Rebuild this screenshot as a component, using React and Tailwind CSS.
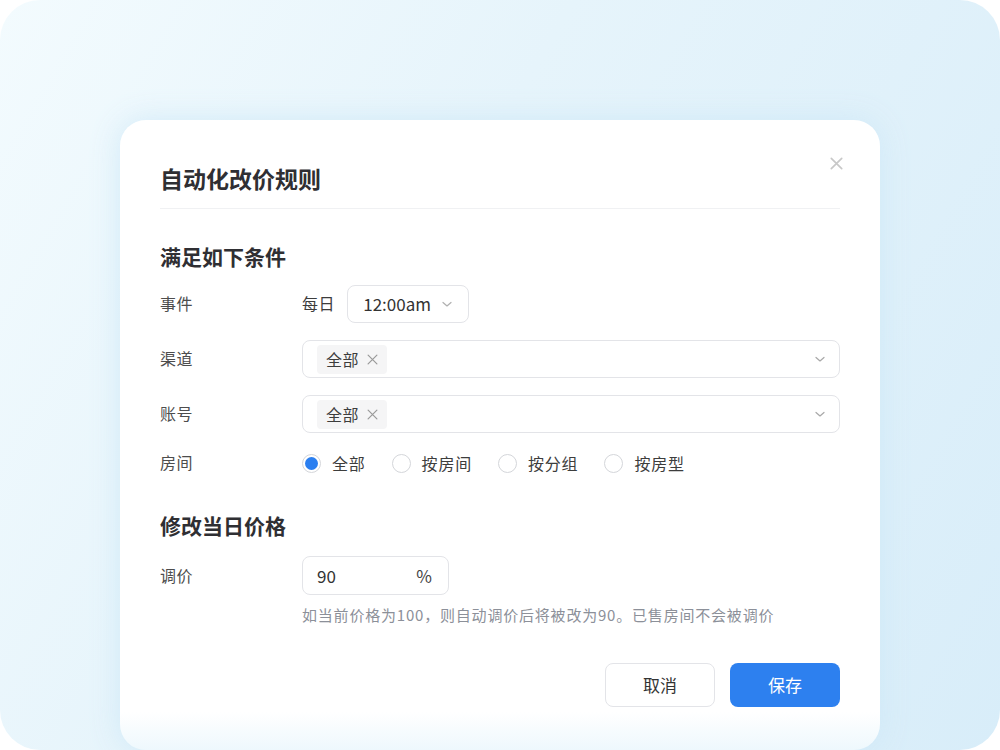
import React from "react";

const font = { fontFamily: '"Noto Sans CJK SC", "Noto Sans", sans-serif' };

function Chevron({ className = "" }) {
  return (
    <svg className={className} width="12" height="12" viewBox="0 0 12 12" fill="none">
      <path d="M2 4.5 L6 8 L10 4.5" stroke="currentColor" strokeWidth="1.2" strokeLinecap="round" strokeLinejoin="round" />
    </svg>
  );
}

function XIcon({ size = 10, className = "", sw = 1.2 }) {
  return (
    <svg className={className} width={size} height={size} viewBox="0 0 10 10" fill="none">
      <path d="M1 1 L9 9 M9 1 L1 9" stroke="currentColor" strokeWidth={sw} strokeLinecap="round" />
    </svg>
  );
}

function Tag() {
  return (
    <div className="flex items-center h-[29px] pl-[9px] pr-[9px] rounded-[4px] bg-[#f5f5f6] gap-[8px]">
      <span className="text-[16px] tracking-[0.6px] text-[#3d3d3d] leading-none">全部</span>
      <XIcon size={11} sw={1.1} className="text-[#9a9a9a]" />
    </div>
  );
}

function MultiSelect() {
  return (
    <div className="flex-1 h-[38px] rounded-[8px] border border-[#e3e4e8] bg-white flex items-center pl-[14px] pr-[13px] justify-between">
      <Tag />
      <Chevron className="text-[#a8a8a8]" />
    </div>
  );
}

function Radio({ checked, label }) {
  return (
    <div className="flex items-center gap-[11px]">
      <div className="w-[19px] h-[19px] rounded-full border border-[#d4d6da] bg-white flex items-center justify-center">
        {checked && <div className="w-[13px] h-[13px] rounded-full bg-[#2b7ff0]" />}
      </div>
      <span className="text-[16px] tracking-[0.8px] text-[#3d3d3d]">{label}</span>
    </div>
  );
}

function Row({ label, children, className = "" }) {
  return (
    <div className={"flex items-center " + className}>
      <div className="w-[142px] text-[16px] tracking-[0.6px] text-[#4d4d4d] -mt-[2px]">{label}</div>
      <div className="flex-1 flex items-center">{children}</div>
    </div>
  );
}

export default function App() {
  return (
    <div className="w-[1000px] h-[750px] bg-white overflow-hidden" style={font}>
      <div className="w-[1000px] h-[750px] rounded-[40px] bg-[linear-gradient(120deg,#f3fbfe_0%,#e6f4fb_40%,#d8edf9_100%)] pt-[120px] px-[120px]">
        <div className="h-[630px] rounded-[26px] bg-[linear-gradient(to_bottom,#ffffff_0%,#ffffff_94%,#eef8fd_100%)] shadow-[0_0_30px_rgba(205,232,247,0.9)] px-[40px] pt-[43px]">
          <div className="flex items-start justify-between">
            <h1 className="text-[23px] leading-[30px] font-bold text-[#2f2f33]">自动化改价规则</h1>
            <XIcon size={13} sw={1.3} className="text-[#c8c8c8] mt-[-6px] mr-[-3px]" />
          </div>
          <div className="mt-[15px] h-px bg-[#f0f1f3]" />

          <h2 className="mt-[33px] text-[21px] leading-[28px] font-bold text-[#2f2f33]">满足如下条件</h2>

          <Row label="事件" className="mt-[15px]">
            <span className="text-[16px] tracking-[0.6px] text-[#3d3d3d] mr-[12px] -mt-[2px]">每日</span>
            <div className="w-[122px] h-[38px] rounded-[8px] border border-[#e3e4e8] flex items-center justify-between pl-[15px] pr-[15px]">
              <span className="text-[17px] text-[#333]">12:00am</span>
              <Chevron className="text-[#b0b0b0]" />
            </div>
          </Row>

          <Row label="渠道" className="mt-[17px]">
            <MultiSelect />
          </Row>

          <Row label="账号" className="mt-[17px]">
            <MultiSelect />
          </Row>

          <Row label="房间" className="mt-[18px] h-[24px]">
            <div className="flex items-center gap-[26px]">
              <Radio checked label="全部" />
              <Radio label="按房间" />
              <Radio label="按分组" />
              <Radio label="按房型" />
            </div>
          </Row>

          <h2 className="mt-[36px] text-[21px] leading-[28px] font-bold text-[#2f2f33]">修改当日价格</h2>

          <Row label="调价" className="mt-[17px]">
            <div className="w-[147px] h-[39px] rounded-[8px] border border-[#e3e4e8] flex items-center justify-between pl-[14px] pr-[16px]">
              <span className="text-[17px] text-[#333]">90</span>
              <span className="text-[17px] text-[#444]">%</span>
            </div>
          </Row>
          <div className="pl-[142px] mt-[10px] text-[15px] tracking-[0.8px] leading-[20px] text-[#8c9099]">
            如当前价格为100，则自动调价后将被改为90。已售房间不会被调价
          </div>

          <div className="mt-[38px] flex justify-end gap-[15px]">
            <button className="w-[110px] h-[44px] rounded-[8px] border border-[#e3e4e8] bg-white text-[17px] text-[#333]" style={font}>取消</button>
            <button className="w-[110px] h-[44px] rounded-[8px] bg-[#2d80ef] text-[17px] text-white" style={font}>保存</button>
          </div>
        </div>
      </div>
    </div>
  );
}
